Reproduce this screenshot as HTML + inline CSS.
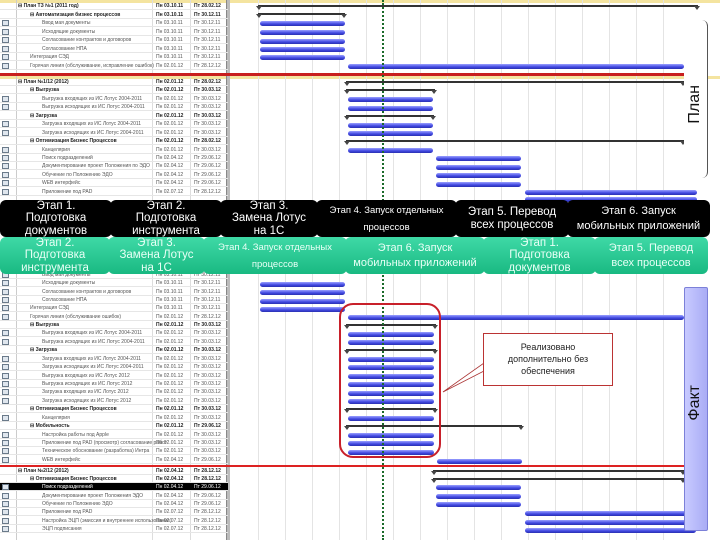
<!DOCTYPE html>
<html><head><meta charset="utf-8"><style>
*{margin:0;padding:0;box-sizing:border-box}
body{width:720px;height:540px;overflow:hidden;background:#fff;position:relative;font-family:"Liberation Sans",sans-serif}
.a{position:absolute}
.r{position:absolute;left:0;width:228px;height:8px;border-bottom:1px solid #e6e6e6;font-size:5px;line-height:8px;color:#555;white-space:nowrap}
.r .n{position:absolute;overflow:hidden;width:135px}
.r .s{position:absolute;left:156px}
.r .e{position:absolute;left:194px}
.r .ic{position:absolute;left:2px;top:1px;width:7px;height:6px;border:1px solid #6a7a8a;background:#dfe6ee}
.b{font-weight:bold;color:#222}
.bar{position:absolute;height:5px;border-radius:3px;background:linear-gradient(#9aa0ff,#3f46e0 60%,#2a30b0);}
.sum{position:absolute;height:2px;background:#333}
.sum:before,.sum:after{content:"";position:absolute;top:1px;border-left:3px solid transparent;border-right:3px solid transparent;border-top:4px solid #444}
.sum:before{left:-2px}.sum:after{right:-2px}
.seg{position:absolute;border-radius:6px;color:#fff;font-size:11.5px;line-height:12.5px;text-align:center;display:flex;align-items:center;justify-content:center}
.k{background:#000;top:200px;height:37px}
.g{background:linear-gradient(#3fd9a6,#19b982);top:237px;height:37px;color:#e8fff6}
</style></head><body>
<div class="a" style="left:0;top:0;width:720px;height:3px;background:#f4e4a0"></div>
<div class="a" style="left:0;top:76px;width:720px;height:3px;background:#f4e4a0"></div>
<div class="a" style="left:16px;top:0;width:1px;height:540px;background:#ccc"></div>
<div class="a" style="left:152px;top:0;width:1px;height:540px;background:#ddd"></div>
<div class="a" style="left:190px;top:0;width:1px;height:540px;background:#ddd"></div>
<div class="a" style="left:226px;top:0;width:4px;height:540px;background:#bbb;border-left:1px solid #888"></div>
<div id="rows"></div>
<div id="grid"></div>
<div class="a" style="left:0;top:73px;width:684px;height:3px;background:#c81e1e"></div>
<div class="a" style="left:0;top:465px;width:684px;height:2px;background:#d22"></div>
<div id="g"></div>
<div class="a" style="left:382px;top:0;height:540px;border-left:2px dotted #1a6a2a"></div>
<div class="a" style="left:684px;top:20px;width:24px;height:158px;background:#fff;border-right:1px solid #555;border-radius:0 6px 6px 0"></div>
<div class="a" style="left:686px;top:85px;width:22px;font-size:16px;writing-mode:vertical-rl;transform:rotate(180deg);color:#111">План</div>
<div class="a" style="left:684px;top:287px;width:24px;height:244px;background:linear-gradient(90deg,#c8caff,#a9acf5);border:1px solid #7c80d8;border-radius:2px"></div>
<div class="a" style="left:686px;top:385px;width:22px;font-size:16px;writing-mode:vertical-rl;transform:rotate(180deg);color:#111">Факт</div>
<div class="a" style="left:339px;top:303px;width:102px;height:155px;border:2px solid #c8202a;border-radius:14px"></div>
<svg class="a" style="left:440px;top:355px" width="50" height="40"><polygon points="3,37 44,8 44,16" fill="#fff" stroke="#a33" stroke-width="0.8"/></svg>
<div class="a" style="left:483px;top:333px;width:130px;height:53px;background:#fff;border:1px solid #b33;font-size:9px;line-height:12px;text-align:center;color:#222;padding-top:7px">Реализовано<br>дополнительно без<br>обеспечения</div>
<div class="seg k" style="left:0;width:112px">Этап 1.<br>Подготовка<br>документов</div>
<div class="seg k" style="left:110px;width:112px">Этап 2.<br>Подготовка<br>инструмента</div>
<div class="seg k" style="left:220px;width:98px">Этап 3.<br>Замена Лотус<br>на 1С</div>
<div class="seg k" style="left:316px;width:141px;font-size:9.5px;line-height:17px">Этап 4. Запуск отдельных<br>процессов</div>
<div class="seg k" style="left:455px;width:114px">Этап 5. Перевод<br>всех процессов</div>
<div class="seg k" style="left:567px;width:143px;font-size:11px;line-height:15px">Этап 6. Запуск<br>мобильных приложений</div>
<div class="seg g" style="left:0;width:110px">Этап 2.<br>Подготовка<br>инструмента</div>
<div class="seg g" style="left:108px;width:97px">Этап 3.<br>Замена Лотус<br>на 1С</div>
<div class="seg g" style="left:203px;width:144px;font-size:9.5px;line-height:17px">Этап 4. Запуск отдельных<br>процессов</div>
<div class="seg g" style="left:345px;width:140px;font-size:11px;line-height:15px">Этап 6. Запуск<br>мобильных приложений</div>
<div class="seg g" style="left:483px;width:113px">Этап 1.<br>Подготовка<br>документов</div>
<div class="seg g" style="left:594px;width:114px;font-size:11px;line-height:15px">Этап 5. Перевод<br>всех процессов</div>
<script>
var R=document.getElementById('rows'),h='';
function row(y,ind,name,b,s,e,ic,sel){
 h+='<div class="r'+(b?' b':'')+'" style="top:'+(y-4)+'px;'+(sel?'background:#000;color:#fff':'')+'">'+(ic?'<span class="ic"></span>':'')+'<span class="n" style="left:'+(18+ind*12)+'px">'+name+'</span><span class="s">'+s+'</span><span class="e">'+e+'</span></div>';}
var t=[[6,0,'⊟ План ТЗ №1 (2011 год)',1,'Пн 03.10.11','Пт 28.02.12',0],
[15,1,'⊟ Автоматизация бизнес процессов',1,'Пн 03.10.11','Пт 30.12.11',0],
[23,2,'Ввод мая документы',0,'Пн 03.10.11','Пт 30.12.11',1],
[32,2,'Исходящие документы',0,'Пн 03.10.11','Пт 30.12.11',1],
[40,2,'Согласование контрактов и договоров',0,'Пн 03.10.11','Пт 30.12.11',1],
[49,2,'Согласование НПА',0,'Пн 03.10.11','Пт 30.12.11',1],
[57,1,'Интеграция СЭД',0,'Пн 03.10.11','Пт 30.12.11',1],
[66,1,'Горячая линия (обслуживание, исправление ошибок)',0,'Пн 02.01.12','Пт 28.12.12',1],
[82,0,'⊟ План №1/12 (2012)',1,'Пн 02.01.12','Пт 28.02.12',0],
[90,1,'⊟ Выгрузка',1,'Пн 02.01.12','Пт 30.03.12',0],
[99,2,'Выгрузка входящих из ИС Лотус 2004-2011',0,'Пн 02.01.12','Пт 30.03.12',1],
[107,2,'Выгрузка исходящих из ИС Лотус 2004-2011',0,'Пн 02.01.12','Пт 30.03.12',1],
[116,1,'⊟ Загрузка',1,'Пн 02.01.12','Пт 30.03.12',0],
[124,2,'Загрузка входящих из ИС Лотус 2004-2011',0,'Пн 02.01.12','Пт 30.03.12',1],
[133,2,'Загрузка исходящих из ИС Лотус 2004-2011',0,'Пн 02.01.12','Пт 30.03.12',1],
[141,1,'⊟ Оптимизация Бизнес Процессов',1,'Пн 02.01.12','Пт 28.02.12',0],
[150,2,'Канцелярия',0,'Пн 02.01.12','Пт 30.03.12',1],
[158,2,'Поиск подразделений',0,'Пн 02.04.12','Пт 29.06.12',1],
[166,2,'Документирование проект Положения по ЭДО',0,'Пн 02.04.12','Пт 29.06.12',1],
[175,2,'Обучение по Положению ЭДО',0,'Пн 02.04.12','Пт 29.06.12',1],
[183,2,'WEB интерфейс',0,'Пн 02.04.12','Пт 29.06.12',1],
[192,2,'Приложение под PAD',0,'Пн 02.07.12','Пт 28.12.12',1],
[275,2,'Ввод мая документы',0,'Пн 03.10.11','Пт 30.12.11',1],
[283,2,'Исходящие документы',0,'Пн 03.10.11','Пт 30.12.11',1],
[292,2,'Согласование контрактов и договоров',0,'Пн 03.10.11','Пт 30.12.11',1],
[300,2,'Согласование НПА',0,'Пн 03.10.11','Пт 30.12.11',1],
[308,1,'Интеграция СЭД',0,'Пн 03.10.11','Пт 30.12.11',1],
[317,1,'Горячая линия (обслуживание ошибок)',0,'Пн 02.01.12','Пт 28.12.12',1],
[325,1,'⊟ Выгрузка',1,'Пн 02.01.12','Пт 30.03.12',0],
[333,2,'Выгрузка входящих из ИС Лотус 2004-2011',0,'Пн 02.01.12','Пт 30.03.12',1],
[342,2,'Выгрузка исходящих из ИС Лотус 2004-2011',0,'Пн 02.01.12','Пт 30.03.12',1],
[350,1,'⊟ Загрузка',1,'Пн 02.01.12','Пт 30.03.12',0],
[359,2,'Загрузка входящих из ИС Лотус 2004-2011',0,'Пн 02.01.12','Пт 30.03.12',1],
[367,2,'Загрузка исходящих из ИС Лотус 2004-2011',0,'Пн 02.01.12','Пт 30.03.12',1],
[376,2,'Выгрузка входящих из ИС Лотус 2012',0,'Пн 02.01.12','Пт 30.03.12',1],
[384,2,'Выгрузка исходящих из ИС Лотус 2012',0,'Пн 02.01.12','Пт 30.03.12',1],
[392,2,'Загрузка входящих из ИС Лотус 2012',0,'Пн 02.01.12','Пт 30.03.12',1],
[401,2,'Загрузка исходящих из ИС Лотус 2012',0,'Пн 02.01.12','Пт 30.03.12',1],
[409,1,'⊟ Оптимизация Бизнес Процессов',1,'Пн 02.01.12','Пт 30.03.12',0],
[418,2,'Канцелярия',0,'Пн 02.01.12','Пт 30.03.12',1],
[426,1,'⊟ Мобильность',1,'Пн 02.01.12','Пт 29.06.12',0],
[435,2,'Настройка работы под Apple',0,'Пн 02.01.12','Пт 30.03.12',1],
[443,2,'Приложение под PAD (просмотр) согласование работ',0,'Пн 02.01.12','Пт 30.03.12',1],
[451,2,'Техническое обоснование (разработка) Интра',0,'Пн 02.01.12','Пт 30.03.12',1],
[460,2,'WEB интерфейс',0,'Пн 02.04.12','Пт 29.06.12',1],
[471,0,'⊟ План №2/12 (2012)',1,'Пн 02.04.12','Пт 28.12.12',0],
[479,1,'⊟ Оптимизация Бизнес Процессов',1,'Пн 02.04.12','Пт 28.12.12',0],
[487,2,'Поиск подразделений',0,'Пн 02.04.12','Пт 29.06.12',1,1],
[496,2,'Документирование проект Положения ЭДО',0,'Пн 02.04.12','Пт 29.06.12',1],
[504,2,'Обучение по Положению ЭДО',0,'Пн 02.04.12','Пт 29.06.12',1],
[512,2,'Приложение под PAD',0,'Пн 02.07.12','Пт 28.12.12',1],
[521,2,'Настройка ЭЦП (эмиссия и внутреннее использование)',0,'Пн 02.07.12','Пт 28.12.12',1],
[529,2,'ЭЦП подписания',0,'Пн 02.07.12','Пт 28.12.12',1]];
t.forEach(function(a){row.apply(null,a)});
R.innerHTML=h;
var G='';for(var x=258;x<684;x+=27)G+='<div class="a" style="left:'+x+'px;top:0;width:1px;height:540px;background:#e4e4e4"></div>';
document.getElementById('grid').innerHTML=G;
var g='';
function B(x1,x2,y){g+='<div class="bar" style="left:'+x1+'px;width:'+(x2-x1)+'px;top:'+(y-2)+'px"></div>'}
function S(x1,x2,y){g+='<div class="sum" style="left:'+x1+'px;width:'+(x2-x1)+'px;top:'+(y-1)+'px"></div>'}
S(258,698,6);S(258,345,14);[23,32,41,49,57].forEach(function(y){B(260,345,y)});B(348,684,66);
S(346,684,82);S(346,435,90);B(348,433,99);B(348,433,108);S(346,434,116);B(348,433,125);B(348,433,133);
S(346,684,141);B(348,433,150);[158,167,175,184].forEach(function(y){B(436,521,y)});B(525,697,192);B(525,697,199);
[284,292,301,309].forEach(function(y){B(260,345,y)});B(348,684,317);S(346,436,325);B(348,434,334);B(348,434,342);S(346,436,350);
[359,367,376,384,393,401].forEach(function(y){B(348,434,y)});S(346,436,409);B(348,434,418);S(346,522,426);[435,443,452].forEach(function(y){B(348,434,y)});
B(437,522,461);S(433,684,471);S(433,684,479);[487,496,504].forEach(function(y){B(436,521,y)});[513,522,530].forEach(function(y){B(525,696,y)});
document.getElementById('g').innerHTML=g;
</script>
</body></html>
